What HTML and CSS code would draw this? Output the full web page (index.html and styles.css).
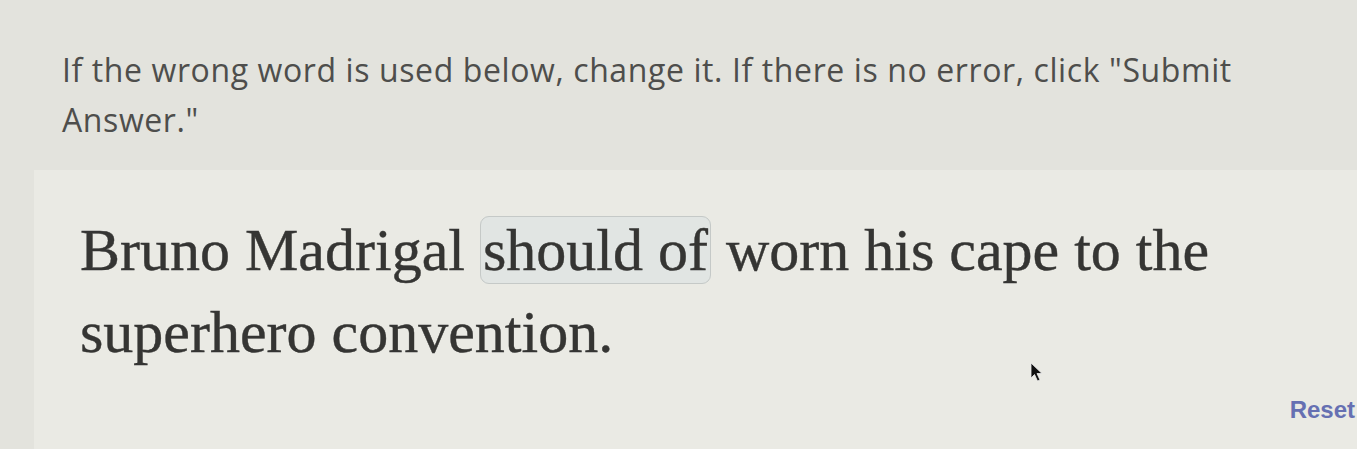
FILE: index.html
```html
<!DOCTYPE html>
<html>
<head>
<meta charset="utf-8">
<link rel="stylesheet" href="styles.css">
</head>
<body>
<div class="page">
  <div class="prompt">If the wrong word is used below, change it. If there is no error, click "Submit Answer."</div>
  <div class="card">
    <p class="sentence">Bruno Madrigal <span class="word">should of</span> worn his cape to the superhero convention.</p>
    <div class="actions"><button class="reset">Reset</button></div>
  </div>
  <svg class="cursor" width="14" height="20" viewBox="0 0 14 20"><path d="M1 1 L1 16 L4.5 12.5 L7.5 19 L10 18 L7 11.5 L12 11.5 Z" fill="#111" stroke="#eee" stroke-width="0.8"/></svg>
</div>
</body>
</html>
```
FILE: styles.css
```css
html, body {
  margin: 0;
  padding: 0;
}
body {
  background: #e3e3dd;
  width: 1357px;
  height: 449px;
  overflow: hidden;
}
.page {
  position: relative;
  height: 449px;
  display: flex;
  flex-direction: column;
}
.prompt {
  font-family: "Open Sans", "Noto Sans", sans-serif;
  font-size: 32px;
  letter-spacing: 0.6px;
  line-height: 50px;
  color: #4e4e4c;
  padding: 45px 0 0 62px;
  width: 1280px;
  height: 170px;
  box-sizing: border-box;
  flex: none;
}
.card {
  flex: 1;
  margin-left: 34px;
  background: #eaeae4;
  padding: 39px 0 0 46px;
  display: flex;
  flex-direction: column;
}
.sentence {
  margin: 0;
  font-family: "Liberation Serif", "DejaVu Serif", serif;
  font-size: 60px;
  line-height: 82px;
  color: #353533;
  width: 1180px;
  -webkit-text-stroke: 0.4px #353533;
}
.word {
  border: 1.5px solid #c5c9c7;
  border-radius: 9px;
  background: #e1e5e3;
  padding: 0 2px;
}
.actions {
  display: flex;
  justify-content: flex-end;
  margin-top: 23px;
}
.reset {
  border: none;
  background: none;
  padding: 0;
  margin-right: 2px;
  font-family: "Liberation Sans", Arial, sans-serif;
  font-weight: bold;
  font-size: 24px;
  color: #6670b2;
}
.cursor {
  position: absolute;
  left: 1030px;
  top: 362px;
}
```
